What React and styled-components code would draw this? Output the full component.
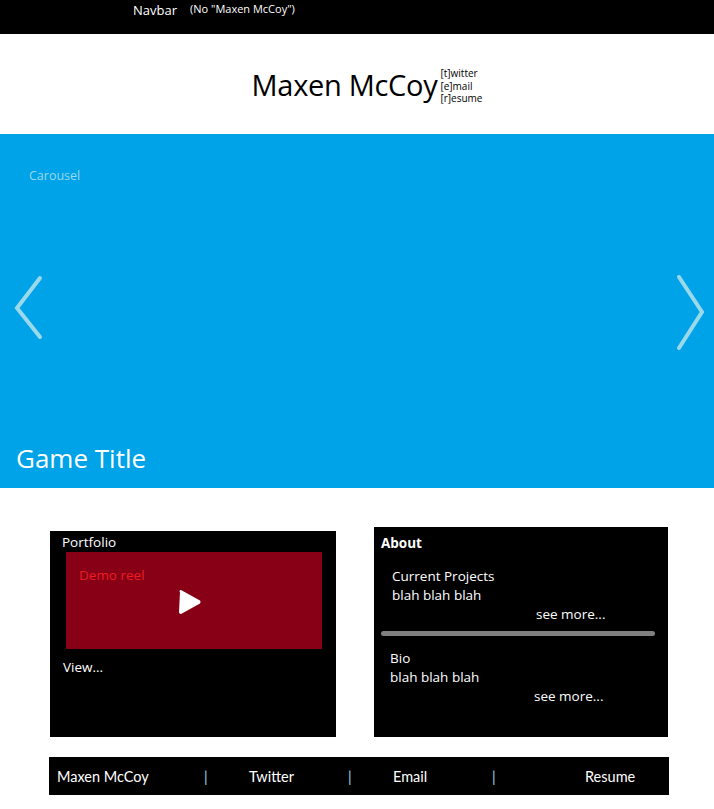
import React from "react";
import styled, { createGlobalStyle } from "styled-components";

const GlobalStyle = createGlobalStyle`
  body {
    margin: 0;
    background: #ffffff;
    font-family: "Open Sans", "Noto Sans", sans-serif;
  }
`;

const Page = styled.div`
  width: 714px;
  min-height: 809px;
  background: #ffffff;
`;

const Navbar = styled.nav`
  height: 34px;
  background: #000;
  color: #fff;
  display: flex;
  align-items: flex-start;
  padding-left: 133px;
  box-sizing: border-box;
`;

const NavLabel = styled.span`
  font-size: ${p => p.size || 13}px;
  margin-top: ${p => p.top || 0}px;
  margin-right: ${p => p.gap || 0}px;
  line-height: 1.2;
`;

const Header = styled.header`
  height: 100px;
  display: flex;
  justify-content: center;
  align-items: center;
  padding-left: 20px;
  box-sizing: border-box;
`;

const Name = styled.h1`
  margin: 0;
  font-weight: 400;
  font-size: 29px;
  color: #000;
  letter-spacing: -0.3px;
`;

const SideLinks = styled.ul`
  list-style: none;
  margin: 4px 0 0 3px;
  padding: 0;
  font-size: 10px;
  line-height: 12.5px;
  color: #000;
`;

const Carousel = styled.section`
  position: relative;
  height: 354px;
  background: #00a2e8;
  display: flex;
  flex-direction: column;
  justify-content: space-between;
  padding: 33px 16px 12px;
  box-sizing: border-box;
`;

const CarouselLabel = styled.span`
  color: #99d9ea;
  font-size: 12.5px;
  margin-left: 13px;
`;

const GameTitle = styled.h2`
  margin: 0;
  font-weight: 400;
  font-size: 26px;
  color: #fff;
`;

const Arrow = styled.svg`
  position: absolute;
  top: ${p => p.top}px;
  ${p => (p.side === "left" ? "left: 13px;" : "right: 8px;")}
`;

const Cards = styled.section`
  display: flex;
  align-items: flex-end;
  gap: 38px;
  padding: 39px 0 0 50px;
`;

const Card = styled.div`
  background: #000;
  color: #fff;
  width: ${p => p.w}px;
  height: ${p => p.h}px;
  box-sizing: border-box;
  padding: ${p => p.pad};
  font-size: 13.5px;
`;

const CardTitle = styled.div`
  font-size: 13.5px;
  font-weight: ${p => (p.bold ? 700 : 400)};
  line-height: 19px;
`;

const Reel = styled.div`
  margin: 0 0 0 4px;
  width: 256px;
  height: 97px;
  background: #880015;
  position: relative;
  padding: 14px 13px;
  box-sizing: border-box;
`;

const ReelLabel = styled.span`
  color: #ed1c24;
  font-size: 13.5px;
`;

const Play = styled.svg`
  position: absolute;
  left: 112px;
  top: 38px;
`;

const ViewLink = styled.div`
  margin-top: 9px;
  padding-left: 1px;
  font-size: 13.5px;
`;

const Block = styled.div`
  padding-left: ${p => p.indent}px;
  line-height: 19px;
  margin-top: ${p => p.top}px;
`;

const SeeMore = styled.div`
  padding-left: ${p => p.indent}px;
  line-height: 19px;
`;

const Divider = styled.div`
  height: 5px;
  border-radius: 3px;
  background: #7f7f7f;
  margin: 7px 6px 0 0;
`;

const Footer = styled.footer`
  margin: 20px 0 0 49px;
  width: 620px;
  height: 38px;
  background: #000;
  display: flex;
  align-items: center;
  padding-left: 8px;
  box-sizing: border-box;
  font-family: "Lato", "Open Sans", sans-serif;
  font-size: 14.5px;
  color: #fff;
`;

const FooterItem = styled.span`
  width: ${p => (p.w ? `${p.w}px` : "auto")};
  flex-shrink: 0;
  color: ${p => (p.pipe ? "#99d9ea" : "#fff")};
`;

function Chevron({ side }) {
  const left = side === "left";
  return (
    <Arrow
      side={side}
      top={left ? 141 : 140}
      width="32"
      height={left ? 66 : 78}
      viewBox={left ? "0 0 32 66" : "0 0 32 78"}
    >
      <path
        d={left ? "M27 3 L4 33 L27 62" : "M5 3 L28 38 L5 74"}
        fill="none"
        stroke="#99d9ea"
        strokeWidth="4"
        strokeLinecap="round"
      />
    </Arrow>
  );
}

export default function App() {
  return (
    <Page>
      <GlobalStyle />
      <Navbar>
        <NavLabel size={13} top={3} gap={13}>Navbar</NavLabel>
        <NavLabel size={11} top={2}>(No "Maxen McCoy")</NavLabel>
      </Navbar>

      <Header>
        <Name>Maxen McCoy</Name>
        <SideLinks>
          <li>[t]witter</li>
          <li>[e]mail</li>
          <li>[r]esume</li>
        </SideLinks>
      </Header>

      <Carousel>
        <CarouselLabel>Carousel</CarouselLabel>
        <Chevron side="left" />
        <Chevron side="right" />
        <GameTitle>Game Title</GameTitle>
      </Carousel>

      <Cards>
        <Card w={286} h={206} pad="2px 14px 0 12px">
          <CardTitle>Portfolio</CardTitle>
          <Reel>
            <ReelLabel>Demo reel</ReelLabel>
            <Play width="23" height="24" viewBox="0 0 23 24">
              <path
                d="M3 2 Q2 1 3 1 L21 11 Q22 12 21 13 L3 23 Q2 23 2 22 Z"
                fill="#fff"
                stroke="#fff"
                strokeWidth="2"
                strokeLinejoin="round"
              />
            </Play>
          </Reel>
          <ViewLink>View...</ViewLink>
        </Card>

        <Card w={294} h={210} pad="7px 7px 0 7px">
          <CardTitle bold>About</CardTitle>
          <Block indent={11} top={14}>
            Current Projects
            <br />
            blah blah blah
          </Block>
          <SeeMore indent={155}>see more...</SeeMore>
          <Divider />
          <Block indent={9} top={13}>
            Bio
            <br />
            blah blah blah
          </Block>
          <SeeMore indent={153}>see more...</SeeMore>
        </Card>
      </Cards>

      <Footer>
        <FooterItem w={147}>Maxen McCoy</FooterItem>
        <FooterItem w={45} pipe>|</FooterItem>
        <FooterItem w={99}>Twitter</FooterItem>
        <FooterItem w={45} pipe>|</FooterItem>
        <FooterItem w={99}>Email</FooterItem>
        <FooterItem w={93} pipe>|</FooterItem>
        <FooterItem>Resume</FooterItem>
      </Footer>
    </Page>
  );
}
